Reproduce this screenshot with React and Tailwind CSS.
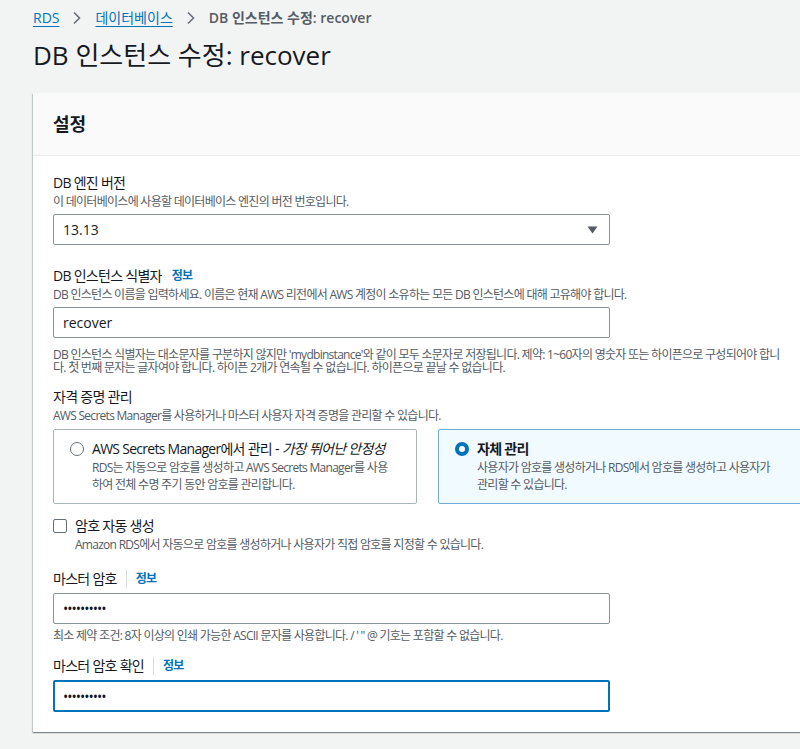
import React from 'react';

const FONT = { fontFamily: '"Open Sans", "Noto Sans CJK KR", sans-serif' };

const Info = ({ sep }) => (
  <span className="flex items-center">
    {sep && <span className="mx-[9px] h-[18px] w-px bg-[#d5dbdb]" />}
    <span className={`text-[12px] font-bold text-[#0073bb] ${sep ? '' : 'ml-[10px]'}`}>정보</span>
  </span>
);

const Label = ({ children, info, sep }) => (
  <div className="flex items-center text-[14px] leading-[20px] text-[#16191f]">
    {children}
    {info && <Info sep={sep} />}
  </div>
);

const Desc = ({ children, className = '', lh = 'leading-[16px]' }) => (
  <div className={`text-[12px] ${lh} text-[#545b64] ${className}`}>{children}</div>
);

const Radio = ({ checked }) =>
  checked ? (
    <span className="mt-[3px] h-[14px] w-[14px] shrink-0 rounded-full border-[4px] border-[#0073bb] bg-white" />
  ) : (
    <span className="mt-[3px] h-[14px] w-[14px] shrink-0 rounded-full border-[1.5px] border-[#687078] bg-white" />
  );

export default function App() {
  return (
    <div className="min-h-[749px] w-[800px] overflow-hidden bg-[#f2f3f3]" style={FONT}>
      <div className="pl-[33px] pt-[9px]">
        {/* breadcrumb */}
        <div className="flex items-center text-[14px] leading-[18px]">
          <span className="text-[#0073bb] underline underline-offset-[3px]">RDS</span>
          <svg className="mx-[13px]" width="10" height="14" viewBox="0 0 10 14">
            <path d="M2 1.5l5.5 5.5L2 12.5" fill="none" stroke="#687078" strokeWidth="1.6" />
          </svg>
          <span className="text-[#0073bb] underline underline-offset-[3px]">데이터베이스</span>
          <svg className="mx-[13px]" width="10" height="14" viewBox="0 0 10 14">
            <path d="M2 1.5l5.5 5.5L2 12.5" fill="none" stroke="#687078" strokeWidth="1.6" />
          </svg>
          <span className="font-semibold text-[#545b64]">DB 인스턴스 수정: recover</span>
        </div>
        <h1 className="mt-[10px] text-[26px] leading-[36px] text-[#16191f]">DB 인스턴스 수정: recover</h1>

        {/* card */}
        <div className="mt-[20px] w-[800px] bg-white shadow-[0_1px_1px_rgba(0,28,36,0.3),1px_1px_1px_rgba(0,28,36,0.15),-1px_1px_1px_rgba(0,28,36,0.15)]">
          <div className="flex h-[63px] items-center border-b border-[#eaeded] bg-[#fafafa] px-[20px]">
            <h2 className="text-[18px] font-bold text-[#16191f]">설정</h2>
          </div>

          <div className="px-[20px] pb-[20px] pt-[17px] tracking-[-0.045em]">
            {/* engine version */}
            <Label>DB 엔진 버전</Label>
            <Desc className="mt-[1px]">이 데이터베이스에 사용할 데이터베이스 엔진의 버전 번호입니다.</Desc>
            <div className="mt-[4px] flex h-[31px] w-[557px] items-center justify-between rounded-[2px] border border-[#879596] pl-[9px] pr-[11px] text-[14px] tracking-normal text-[#16191f]">
              <span>13.13</span>
              <svg width="11" height="8" viewBox="0 0 11 8">
                <path d="M0.5 0.5h10L5.5 7.5z" fill="#545b64" />
              </svg>
            </div>

            {/* identifier */}
            <div className="mt-[21px]">
              <Label info>DB 인스턴스 식별자</Label>
              <Desc className="mt-[1px]">
                DB 인스턴스 이름을 입력하세요. 이름은 현재 AWS 리전에서 AWS 계정이 소유하는 모든 DB 인스턴스에 대해 고유해야 합니다.
              </Desc>
              <div className="mt-[4px] flex h-[31px] w-[557px] items-center rounded-[2px] border border-[#879596] pl-[9px] text-[14px] tracking-normal text-[#16191f]">
                recover
              </div>
              <Desc lh="leading-[13px]" className="mt-[10px] w-[736px]">
                DB 인스턴스 식별자는 대소문자를 구분하지 않지만 'mydbinstance'와 같이 모두 소문자로 저장됩니다. 제약: 1~60자의 영숫자 또는 하이픈으로 구성되어야 합니다. 첫 번째 문자는 글자여야 합니다. 하이픈 2개가 연속될 수 없습니다. 하이픈으로 끝날 수 없습니다.
              </Desc>
            </div>

            {/* credentials */}
            <div className="mt-[13px]">
              <Label>자격 증명 관리</Label>
              <Desc className="mt-[1px]">AWS Secrets Manager를 사용하거나 마스터 사용자 자격 증명을 관리할 수 있습니다.</Desc>
              <div className="mt-[5px] flex gap-[21px]">
                <div className="flex h-[75px] w-[364px] shrink-0 gap-[8px] rounded-[2px] border border-[#aab7b8] px-[16px] pt-[9px]">
                  <Radio />
                  <div>
                    <div className="text-[14px] leading-[20px] text-[#16191f]">
                      AWS Secrets Manager에서 관리 - <i>가장 뛰어난 안정성</i>
                    </div>
                    <Desc lh="leading-[17px]" className="w-[300px]">
                      RDS는 자동으로 암호를 생성하고 AWS Secrets Manager를 사용하여 전체 수명 주기 동안 암호를 관리합니다.
                    </Desc>
                  </div>
                </div>
                <div className="flex h-[75px] w-[380px] shrink-0 gap-[8px] rounded-[2px] border border-[#72acd8] bg-[#f1faff] px-[16px] pt-[9px]">
                  <Radio checked />
                  <div>
                    <div className="text-[14px] font-semibold leading-[20px] text-[#16191f]">자체 관리</div>
                    <Desc lh="leading-[17px]" className="w-[300px]">
                      사용자가 암호를 생성하거나 RDS에서 암호를 생성하고 사용자가 관리할 수 있습니다.
                    </Desc>
                  </div>
                </div>
              </div>
            </div>

            {/* auto generate */}
            <div className="mt-[13px] flex gap-[8px]">
              <span className="mt-[2px] h-[14px] w-[14px] shrink-0 rounded-[2px] border-[1.5px] border-[#687078] bg-white" />
              <div>
                <div className="text-[14px] leading-[18px] text-[#16191f]">암호 자동 생성</div>
                <Desc className="mt-[2px]">Amazon RDS에서 자동으로 암호를 생성하거나 사용자가 직접 암호를 지정할 수 있습니다.</Desc>
              </div>
            </div>

            {/* master password */}
            <div className="mt-[16px]">
              <Label info sep>마스터 암호</Label>
              <div className="mt-[4px] flex h-[31px] w-[557px] items-center rounded-[2px] border border-[#879596] pl-[9px] text-[14px] tracking-[-1px] text-[#16191f]">
                ••••••••••
              </div>
              <Desc className="mt-[4px]">최소 제약 조건: 8자 이상의 인쇄 가능한 ASCII 문자를 사용합니다. / ' " @ 기호는 포함할 수 없습니다.</Desc>
            </div>

            <div className="mt-[12px]">
              <Label info sep>마스터 암호 확인</Label>
              <div className="mt-[4px] flex h-[32px] w-[557px] items-center rounded-[2px] border-2 border-[#0073bb] pl-[8px] text-[14px] tracking-[-1px] text-[#16191f]">
                ••••••••••
              </div>
            </div>
          </div>
        </div>
      </div>
    </div>
  );
}
